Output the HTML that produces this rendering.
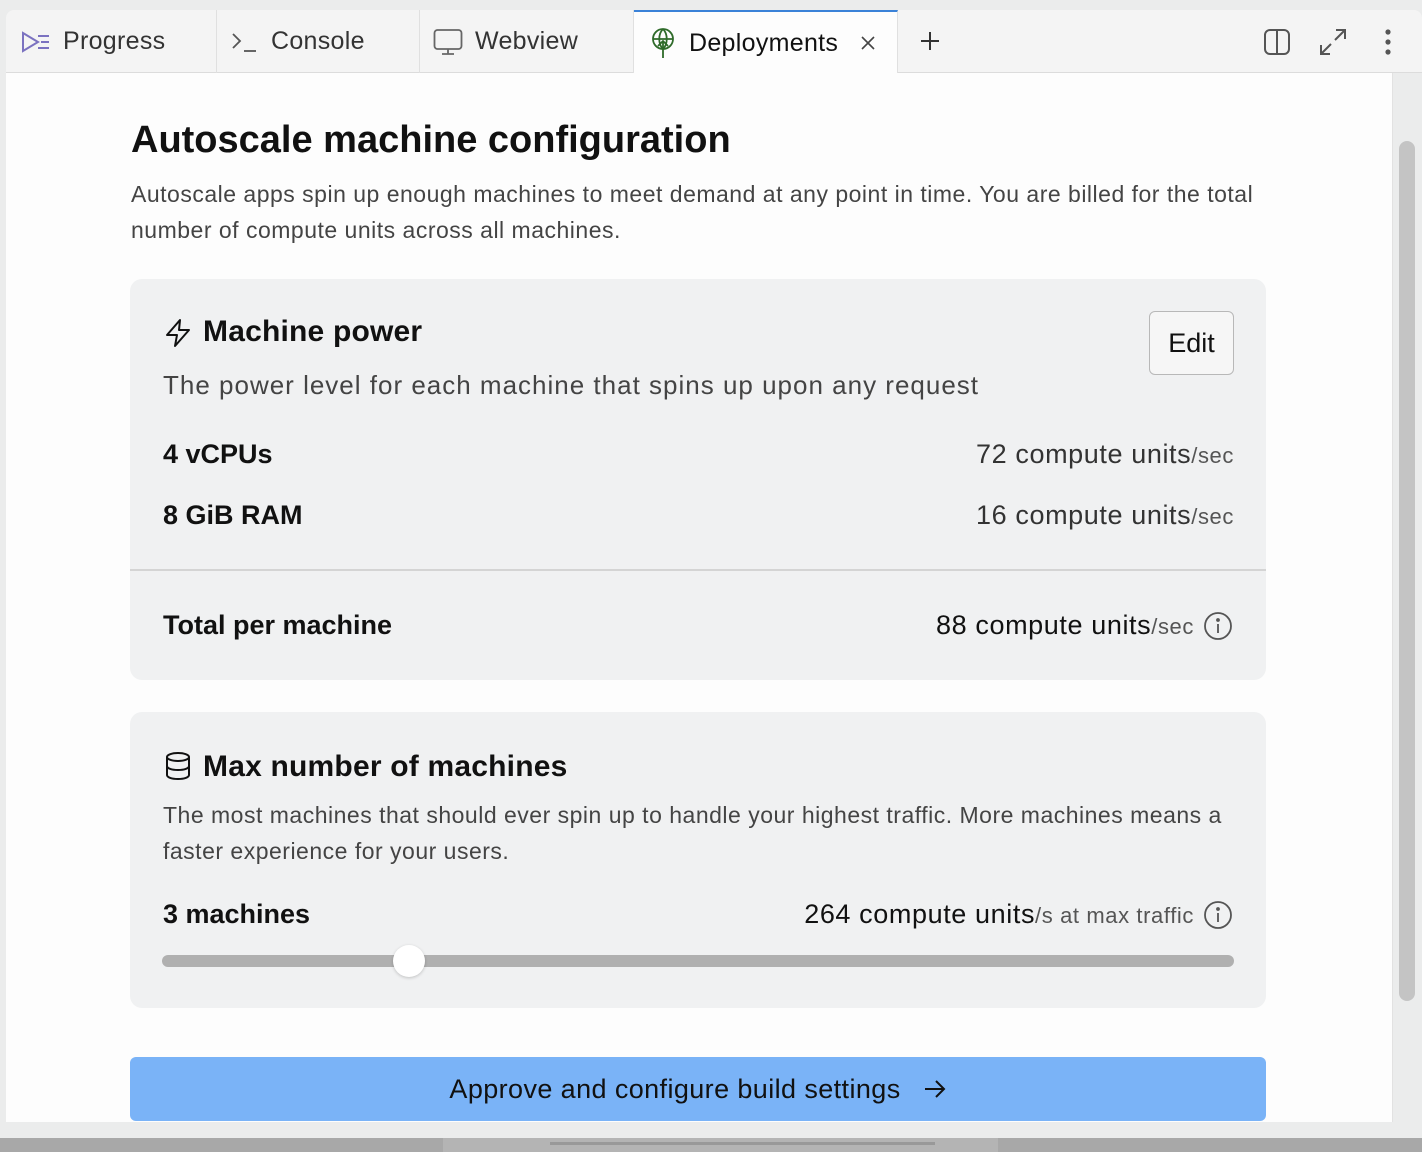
<!DOCTYPE html>
<html><head><meta charset="utf-8">
<style>
*{margin:0;padding:0;box-sizing:border-box}
html,body{width:1422px;height:1152px;overflow:hidden;background:#ebecec;font-family:"Liberation Sans",sans-serif;color:#111}
.abs{position:absolute}
.tabbar{left:6px;top:10px;width:1416px;height:63px;background:#f4f4f4;border-bottom:1px solid #dcdcdc;border-radius:8px 8px 0 0}
.tab{top:10px;height:63px;display:flex;align-items:center;font-size:25px;color:#333;border-right:1px solid #e0e0e0;letter-spacing:.3px}
.tab svg{margin-right:12px}
.main{left:6px;top:73px;width:1386px;height:1049px;background:#fdfdfd}
.card{left:130px;width:1136px;background:#f0f1f2;border-radius:12px}
.t{white-space:nowrap}
.v{letter-spacing:.6px}
</style></head><body>
<div class="abs tabbar"></div>
<div class="abs tab" style="left:6px;width:211px;padding-left:15px">
<svg width="30" height="24" viewBox="0 0 30 24" fill="none" stroke="#7b72c0" stroke-width="2"><path d="M2 3 L17 12 L2 21 Z"/><path d="M17 6h11M20 12h8M17 18h11"/></svg>Progress</div>
<div class="abs tab" style="left:217px;width:203px;padding-left:14px">
<svg width="28" height="24" viewBox="0 0 28 24" fill="none" stroke="#555" stroke-width="1.8"><path d="M2 4 L9 11 L2 18"/><path d="M13 21h12"/></svg>Console</div>
<div class="abs tab" style="left:420px;width:214px;padding-left:13px">
<svg width="30" height="28" viewBox="0 0 30 28" fill="none" stroke="#666" stroke-width="1.8"><rect x="1.5" y="2" width="27" height="19" rx="3"/><path d="M15 21v5M9 26h12"/></svg>Webview</div>
<div class="abs tab" style="left:634px;top:10px;width:264px;background:#fdfdfd;border-top:2px solid #3b82d8;padding-left:15px;height:64px;color:#111">
<svg width="28" height="32" viewBox="0 0 28 32" fill="none" stroke="#2f6b2a" stroke-width="1.8"><circle cx="14" cy="12" r="10"/><path d="M4 12h20M14 2c-5 5-5 15 0 20M14 2c5 5 5 15 0 20"/><path d="M14 31V14M9 19l5-5 5 5"/></svg>Deployments
<svg style="margin-left:22px" width="16" height="16" viewBox="0 0 16 16" stroke="#444" stroke-width="1.6"><path d="M2 2l12 12M14 2L2 14"/></svg></div>
<svg class="abs" style="left:919px;top:30px" width="22" height="22" viewBox="0 0 22 22" stroke="#333" stroke-width="2"><path d="M11 2v18M2 11h18"/></svg>
<svg class="abs" style="left:1263px;top:28px" width="28" height="28" viewBox="0 0 28 28" fill="none" stroke="#555" stroke-width="2"><rect x="2" y="2" width="24" height="24" rx="5"/><path d="M14 2v24"/></svg>
<svg class="abs" style="left:1318px;top:27px" width="30" height="30" viewBox="0 0 30 30" fill="none" stroke="#555" stroke-width="2"><path d="M18 3h9v9M27 3L17 13M12 27H3v-9M3 27l10-10"/></svg>
<svg class="abs" style="left:1383px;top:28px" width="10" height="28" viewBox="0 0 10 28" fill="#555"><circle cx="5" cy="4" r="2.6"/><circle cx="5" cy="14" r="2.6"/><circle cx="5" cy="24" r="2.6"/></svg>

<div class="abs main"></div>
<div class="abs" style="left:1392px;top:73px;width:1px;height:1049px;background:#e2e2e2"></div>
<div class="abs" style="left:1399px;top:141px;width:16px;height:860px;background:#c4c4c4;border-radius:8px"></div>

<div class="abs t" style="left:131px;top:119px;font-size:38px;font-weight:bold">Autoscale machine configuration</div>
<div class="abs" style="left:131px;top:176px;width:1150px;font-size:23px;line-height:36px;color:#444;letter-spacing:.5px">Autoscale apps spin up enough machines to meet demand at any point in time. You are billed for the total number of compute units across all machines.</div>

<div class="abs card" style="top:279px;height:401px"></div>
<svg class="abs" style="left:164px;top:318px" width="28" height="30" viewBox="0 0 28 30" fill="none" stroke="#111" stroke-width="2" stroke-linejoin="round"><path d="M16 2L3 17h10l-2 11 14-16H15z"/></svg>
<div class="abs t" style="left:203px;top:315px;font-size:30px;font-weight:bold;letter-spacing:.2px">Machine power</div>
<div class="abs t" style="left:163px;top:370px;font-size:26px;color:#444;letter-spacing:1px">The power level for each machine that spins up upon any request</div>
<div class="abs" style="left:1149px;top:311px;width:85px;height:64px;border:1.5px solid #b8b8b8;border-radius:6px;background:#f6f6f6;font-size:27px;display:flex;align-items:center;justify-content:center">Edit</div>
<div class="abs t" style="left:163px;top:439px;font-size:27px;font-weight:bold">4 vCPUs</div>
<div class="abs t v" style="right:188px;top:439px;font-size:27px;color:#333">72 compute units<span style="font-size:22px;color:#555">/sec</span></div>
<div class="abs t" style="left:163px;top:500px;font-size:27px;font-weight:bold">8 GiB RAM</div>
<div class="abs t v" style="right:188px;top:500px;font-size:27px;color:#333">16 compute units<span style="font-size:22px;color:#555">/sec</span></div>
<div class="abs" style="left:130px;top:569px;width:1136px;height:2px;background:#d4d4d4"></div>
<div class="abs t" style="left:163px;top:610px;font-size:27px;font-weight:bold">Total per machine</div>
<div class="abs t v" style="right:228px;top:610px;font-size:27px">88 compute units<span style="font-size:22px;color:#555">/sec</span></div>
<svg class="abs" style="left:1203px;top:611px" width="30" height="30" viewBox="0 0 30 30" fill="none" stroke="#555" stroke-width="1.8"><circle cx="15" cy="15" r="13"/><path d="M15 13v9"/><circle cx="15" cy="9" r="1" fill="#555"/></svg>

<div class="abs card" style="top:712px;height:296px"></div>
<svg class="abs" style="left:164px;top:751px" width="28" height="30" viewBox="0 0 28 30" fill="none" stroke="#111" stroke-width="2"><ellipse cx="14" cy="6" rx="11" ry="4"/><path d="M3 6v18c0 2.5 5 4 11 4s11-1.5 11-4V6M3 15c0 2.5 5 4 11 4s11-1.5 11-4"/></svg>
<div class="abs t" style="left:203px;top:750px;font-size:30px;font-weight:bold;letter-spacing:.2px">Max number of machines</div>
<div class="abs" style="left:163px;top:797px;width:1080px;font-size:23px;line-height:36px;color:#444;letter-spacing:.5px">The most machines that should ever spin up to handle your highest traffic. More machines means a faster experience for your users.</div>
<div class="abs t" style="left:163px;top:899px;font-size:27px;font-weight:bold">3 machines</div>
<div class="abs t v" style="right:228px;top:899px;font-size:27px">264 compute units<span style="font-size:22px;color:#555">/s at max traffic</span></div>
<svg class="abs" style="left:1203px;top:900px" width="30" height="30" viewBox="0 0 30 30" fill="none" stroke="#555" stroke-width="1.8"><circle cx="15" cy="15" r="13"/><path d="M15 13v9"/><circle cx="15" cy="9" r="1" fill="#555"/></svg>
<div class="abs" style="left:162px;top:955px;width:1072px;height:12px;background:#b0b0b0;border-radius:6px"></div>
<div class="abs" style="left:393px;top:945px;width:32px;height:32px;background:#fff;border-radius:50%;box-shadow:0 1px 3px rgba(0,0,0,.2)"></div>

<div class="abs" style="left:130px;top:1057px;width:1136px;height:64px;background:#7ab3f7;border-radius:6px;display:flex;align-items:center;justify-content:center;font-size:27px;color:#111;letter-spacing:.4px">Approve and configure build settings
<svg style="margin-left:22px" width="24" height="22" viewBox="0 0 24 22" fill="none" stroke="#111" stroke-width="2"><path d="M2 11h19M13 3l8 8-8 8"/></svg></div>

<div class="abs" style="left:0;top:1138px;width:1422px;height:14px;background:#a8a8a8"></div>
<div class="abs" style="left:443px;top:1138px;width:555px;height:14px;background:#b4b4b4"></div>
<div class="abs" style="left:550px;top:1142px;width:385px;height:3px;background:#999"></div>
</body></html>
